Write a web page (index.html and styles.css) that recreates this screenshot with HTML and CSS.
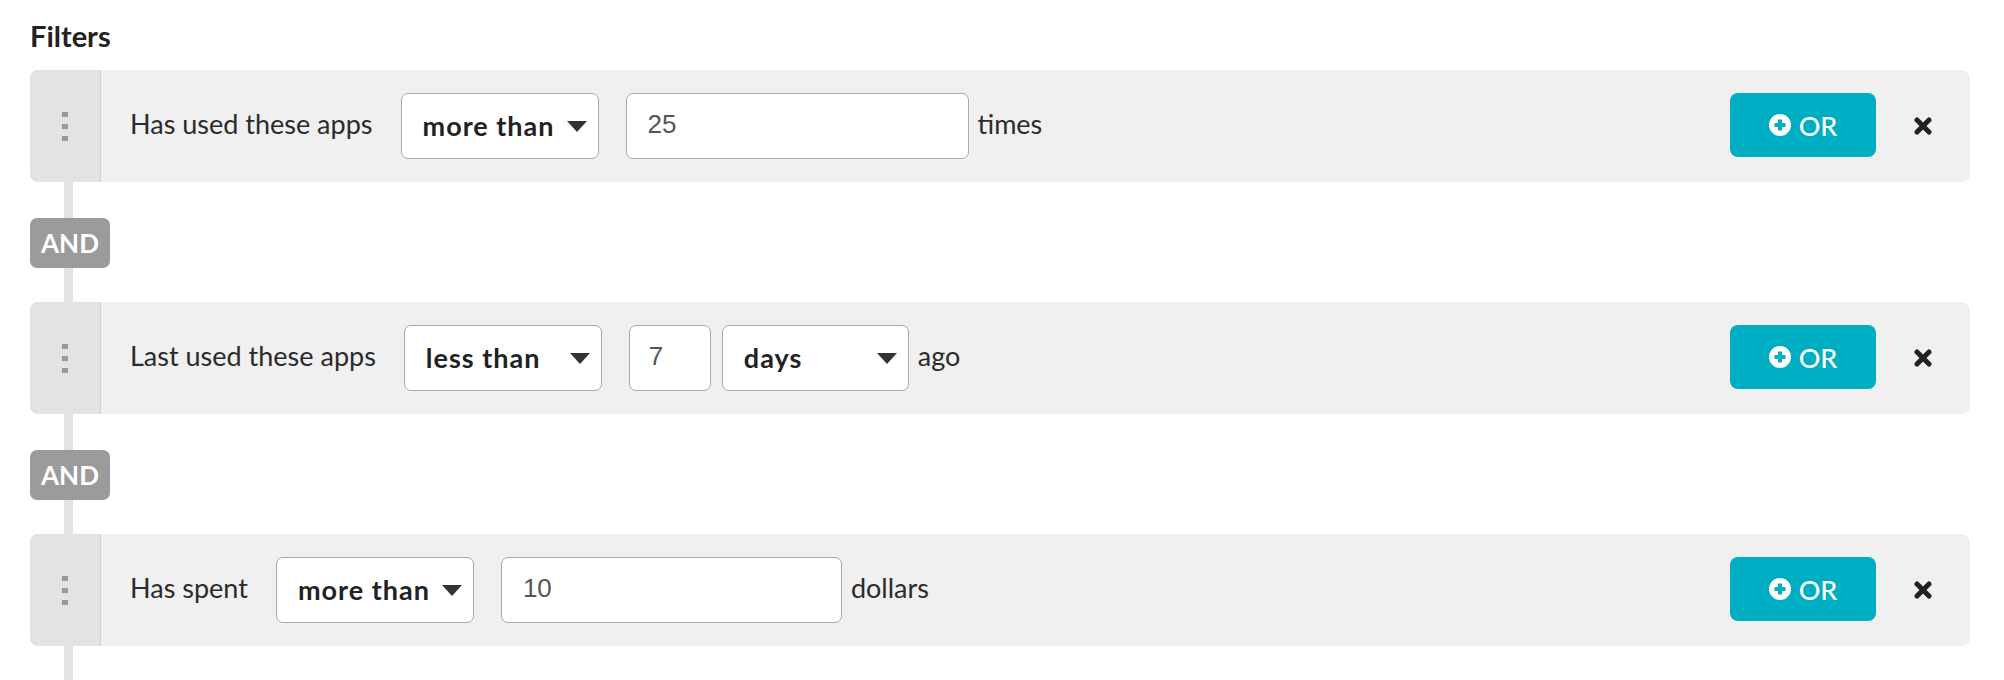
FILE: index.html
```html
<!DOCTYPE html>
<html>
<head>
<meta charset="utf-8">
<link rel="stylesheet" href="styles.css">
</head>
<body>
<div class="filters">
  <h2 class="title">Filters</h2>

  <div class="row">
    <div class="handle"><span class="dots"><i></i><i></i><i></i></span></div>
    <div class="fields">
      <span class="label">Has used these apps</span>
      <div class="select w198"><span>more than</span><b class="caret"></b></div>
      <div class="input w343">25</div>
      <span class="after">times</span>
    </div>
    <button class="or-btn"><svg class="plus" viewBox="0 0 22 22"><circle cx="11" cy="11" r="11" fill="#fff"/><path d="M11 5.5v11M5.5 11h11" stroke="#00aec4" stroke-width="4"/></svg>OR</button>
    <svg class="close" viewBox="0 0 18 18"><path d="M3 3L15 15M15 3L3 15" stroke="#222" stroke-width="5" stroke-linecap="round"/></svg>
  </div>

  <div class="connector"><span class="and">AND</span></div>

  <div class="row">
    <div class="handle"><span class="dots"><i></i><i></i><i></i></span></div>
    <div class="fields">
      <span class="label">Last used these apps</span>
      <div class="select w198"><span>less than</span><b class="caret"></b></div>
      <div class="input w82">7</div>
      <div class="select w187 tight"><span>days</span><b class="caret"></b></div>
      <span class="after">ago</span>
    </div>
    <button class="or-btn"><svg class="plus" viewBox="0 0 22 22"><circle cx="11" cy="11" r="11" fill="#fff"/><path d="M11 5.5v11M5.5 11h11" stroke="#00aec4" stroke-width="4"/></svg>OR</button>
    <svg class="close" viewBox="0 0 18 18"><path d="M3 3L15 15M15 3L3 15" stroke="#222" stroke-width="5" stroke-linecap="round"/></svg>
  </div>

  <div class="connector"><span class="and">AND</span></div>

  <div class="row">
    <div class="handle"><span class="dots"><i></i><i></i><i></i></span></div>
    <div class="fields">
      <span class="label">Has spent</span>
      <div class="select w198"><span>more than</span><b class="caret"></b></div>
      <div class="input w341">10</div>
      <span class="after">dollars</span>
    </div>
    <button class="or-btn"><svg class="plus" viewBox="0 0 22 22"><circle cx="11" cy="11" r="11" fill="#fff"/><path d="M11 5.5v11M5.5 11h11" stroke="#00aec4" stroke-width="4"/></svg>OR</button>
    <svg class="close" viewBox="0 0 18 18"><path d="M3 3L15 15M15 3L3 15" stroke="#222" stroke-width="5" stroke-linecap="round"/></svg>
  </div>

  <div class="connector tail"></div>
</div>
</body>
</html>
```

FILE: styles.css
```css
* { box-sizing: border-box; }
html, body { margin: 0; padding: 0; background: #fff; }
body {
  font-family: Lato, "Noto Sans", sans-serif;
  color: #2b2b2b;
  overflow: hidden;
}
.filters {
  padding: 16px 34px 0 30px;
}
.title {
  margin: 0 0 14px 0;
  font-size: 29px;
  line-height: 40px;
  font-weight: 700;
  color: #222;
}
.row {
  display: flex;
  align-items: center;
  height: 112px;
  background: #f0f0f0;
  border-radius: 8px;
}
.handle {
  width: 71px;
  align-self: stretch;
  background: #e3e3e3;
  border-right: 1px solid #d2d2d2;
  border-radius: 8px 0 0 8px;
  display: flex;
  align-items: center;
  justify-content: center;
}
.dots {
  display: flex;
  flex-direction: column;
  gap: 7px;
}
.dots i {
  display: block;
  width: 6px;
  height: 5px;
  background: #999;
}
.fields {
  flex: 1;
  display: flex;
  align-items: center;
  padding-left: 29px;
}
.label {
  font-size: 27px;
  line-height: 32px;
  margin: 0 28px 4px 0;
  color: #2b2b2b;
}
.select {
  height: 66px;
  background: #fff;
  border: 1.5px solid #a9a9a9;
  border-radius: 7px;
  display: flex;
  align-items: center;
  justify-content: space-between;
  padding: 0 11px 0 21px;
  font-size: 27px;
  letter-spacing: 1px;
  font-weight: 700;
  color: #222;
}
.select span { margin-bottom: 2px; }
.caret {
  flex: none;
  width: 0;
  height: 0;
  border-left: 10px solid transparent;
  border-right: 10px solid transparent;
  border-top: 11px solid #333;
}
.input {
  height: 66px;
  background: #fff;
  border: 1.5px solid #a9a9a9;
  border-radius: 7px;
  display: flex;
  align-items: center;
  padding: 0 21px 3px;
  margin-left: 27px;
  font-family: "Liberation Sans", Arial, sans-serif;
  font-size: 26px;
  color: #555;
}
.w198 { width: 198px; }
.w187 { width: 187px; }
.w343 { width: 343px; }
.w341 { width: 341px; }
.w82 { width: 82px; padding-left: 19px; padding-right: 18px; }
.tight { margin-left: 11px; }
.after {
  margin: 0 0 4px 9px;
  font-size: 27px;
  line-height: 32px;
  color: #2b2b2b;
}
.or-btn {
  width: 146px;
  height: 64px;
  border: 0;
  border-radius: 8px;
  background: #00aec4;
  color: #fff;
  font-family: Lato, "Noto Sans", sans-serif;
  font-size: 27px;
  font-weight: 500;
  display: flex;
  align-items: center;
  justify-content: center;
  gap: 8px;
  padding: 0;
  margin-top: -2px;
}
.plus { width: 22px; height: 22px; }
.close {
  width: 18px;
  height: 18px;
  margin: 0 38px 0 38px;
}
.connector {
  height: 120px;
  padding-top: 36px;
  background: linear-gradient(#e3e3e3, #e3e3e3) no-repeat 34px 0 / 9px 100%;
}
.connector.tail { height: 40px; padding: 0; }
.and {
  display: inline-flex;
  align-items: center;
  justify-content: center;
  width: 80px;
  height: 50px;
  border-radius: 7px;
  background: #9b9b9b;
  color: #fff;
  font-size: 26px;
  font-weight: 700;
}
```
